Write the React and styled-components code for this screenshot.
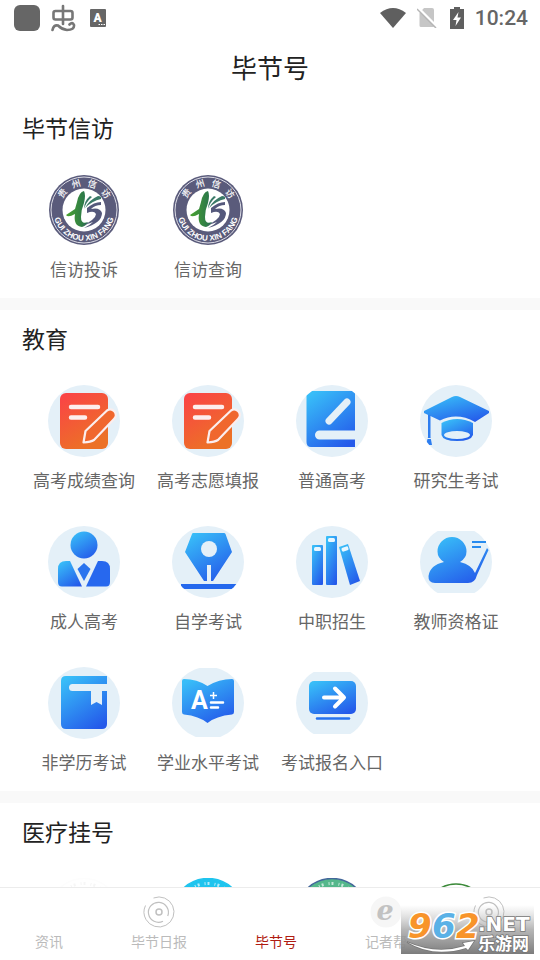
import React from "react";
import styled, { createGlobalStyle } from "styled-components";

const BLUE = "url(#blue)";
const PALE = "#e4f0f8";

const ExamIcon = () => (
	<>
		<circle cx="36" cy="36" r="36" fill={PALE} />
		<rect x="12" y="8" width="48" height="56" rx="6" fill="url(#red)" />
		<path
			d="M23 22H50M23 32.500H37"
			stroke="#fdeeee"
			strokeWidth="4.500"
			strokeLinecap="round"
		/>
		<path
			d="M35.500 57.500L37.500 46L59 25.500Q63 23 66.500 26.500Q69.500 30.500 66 34L46 55Q43 57 35.500 57.500Z"
			fill="#f0672e"
			stroke="#fbeeee"
			strokeWidth="2.200"
			strokeLinejoin="round"
		/>
	</>
);

const NotebookIcon = () => (
	<>
		<circle cx="36" cy="36" r="36" fill={PALE} />
		<g clipPath="url(#round)">
			<path
				d="M15 6H59V45.500H23.500A4.500 4.500 0 0 0 23.500 54.500H59V62H15Q10.500 62 10.500 57V11Q10.500 6 15 6Z"
				fill={BLUE}
			/>
			<path
				d="M33 36L51 17"
				stroke={PALE}
				strokeWidth="7"
				strokeLinecap="round"
			/>
		</g>
	</>
);

const CapIcon = () => (
	<>
		<circle cx="36" cy="36" r="36" fill={PALE} />
		<g clipPath="url(#round)">
			<path
				d="M4 26L32 12Q36 10 40 12L69 26V28L55 37Q37 27 20 35.500L4 28Z"
				fill={BLUE}
			/>
			<path
				d="M21.500 38Q37 30 53 38V50Q51 56 37 56Q23 56 21.500 50Z"
				fill={BLUE}
			/>
			<ellipse cx="37" cy="50" rx="13" ry="4" fill={PALE} />
			<path d="M8 30H10.500V52L12 60H6L8 52Z" fill="#2c7df0" />
			<path d="M6 53.500H12.500" stroke={PALE} />
		</g>
	</>
);

const SuitIcon = () => (
	<>
		<circle cx="36" cy="36" r="36" fill={PALE} />
		<circle cx="36" cy="19" r="13.500" fill={BLUE} />
		<path
			d="M18 35H22L34 60.500H14Q10 60.500 10 56V43Q10 35 18 35Z"
			fill={BLUE}
		/>
		<path
			d="M50 35H54Q62 35 62 43V56Q62 60.500 58 60.500H38Z"
			fill="#2768ee"
		/>
		<path d="M36 37L42.500 43L36 55L29.500 43Z" fill="#2a74ee" />
	</>
);

const NibIcon = () => (
	<>
		<circle cx="36" cy="36" r="36" fill={PALE} />
		<g clipPath="url(#round)">
			<path
				d="M21 7H52Q53 7 53.500 8L60 26L41 55H39V39H35V55H32L13 26L20 8Q20.500 7 21 7Z"
				fill={BLUE}
			/>
			<circle cx="37" cy="23" r="8" fill={PALE} />
			<rect x="9" y="58" width="56" height="5" fill="#2468ed" />
		</g>
	</>
);

const BooksIcon = () => (
	<>
		<circle cx="36" cy="36" r="36" fill={PALE} />
		<rect x="16" y="19" width="11" height="40" rx="1" fill={BLUE} />
		<rect x="30" y="10" width="11" height="49" rx="1" fill={BLUE} />
		<path d="M43 21L52 18L64 55L54 59Z" fill={BLUE} />
		<g fill="#e9f7ff">
			<rect x="18" y="21" width="7" height="4" rx="1.500" />
			<rect x="32" y="12" width="7" height="4" rx="1.500" />
			<rect
				x="45.500"
				y="21"
				width="7"
				height="4"
				rx="1.500"
				transform="rotate(-18 49 23)"
			/>
		</g>
	</>
);

const TeacherIcon = () => (
	<>
		<circle cx="36" cy="36" r="36" fill={PALE} clipPath="url(#band)" />
		<path
			d="M24 36Q17.500 32 17.500 25.500A14.500 14.500 0 0 1 46.500 25.500Q46.500 32 40 36Q52 39 55 47L67 22L68.500 24L57 49Q55 57 48 57H15Q8 57 8.500 50Q10 39 24 36Z"
			fill={BLUE}
		/>
		<path d="M52 16H66M52 21H61" stroke="#278bef" strokeWidth="2" />
	</>
);

const BookmarkIcon = () => (
	<>
		<circle cx="36" cy="36" r="36" fill={PALE} />
		<path
			d="M18 9H59V17H24.500A3.500 3.500 0 0 0 24.500 24H43V38L48.500 35L54 38V24H59V57Q59 62 54 62H18Q13 62 13 57V14Q13 9 18 9Z"
			fill={BLUE}
		/>
	</>
);

const GradeIcon = () => (
	<>
		<circle cx="36" cy="36" r="36" fill={PALE} clipPath="url(#wideBand)" />
		<path
			d="M12 12Q25 12 35.500 19Q47 12 60 12Q62 12 62 14V45Q62 47 60 47.500Q44 49 35.500 56Q27 49 12 47.500Q10 47 10 45V14Q10 12 12 12Z"
			fill={BLUE}
		/>
		<text
			x="19"
			y="42"
			fill="#fff"
			fontFamily="Roboto, sans-serif"
			fontWeight="700"
			fontSize="25"
		>
			A
		</text>
		<path
			d="M38 28.500H45M41.500 25V32"
			stroke="#fff"
			strokeWidth="1.500"
		/>
		<path
			d="M39 35.500H51M39 40.500H46"
			stroke="#fff"
			strokeWidth="2.500"
			strokeLinecap="round"
		/>
	</>
);

const EntryIcon = () => (
	<>
		<circle cx="36" cy="36" r="36" fill={PALE} clipPath="url(#band)" />
		<rect x="13" y="14" width="47" height="33" rx="5" fill={BLUE} />
		<path
			d="M28 30.500H47M39 21.500L48 30.500L39 39.500"
			fill="none"
			stroke="#fff"
			strokeWidth="4"
			strokeLinecap="round"
			strokeLinejoin="round"
		/>
		<path
			d="M21 51.500H53"
			stroke="#2671ee"
			strokeWidth="2.500"
			strokeLinecap="round"
		/>
	</>
);

const ringChars = [
	["贵", -52],
	["州", -17],
	["信", 18],
	["访", 53],
];

const SealIcon = () => (
	<>
		<circle cx="36" cy="36" r="35" fill="#5a5b7b" />
		<circle cx="36" cy="36" r="33" fill="none" stroke="#dcdce6" />
		<circle cx="36" cy="36" r="21.500" fill="#fff" />
		<g
			fill="#fff"
			fontFamily="'Noto Sans CJK SC', sans-serif"
			fontWeight="500"
			fontSize="9"
			textAnchor="middle"
		>
			{ringChars.map(([char, angle]) => (
				<text key={char} x="36" y="12" transform={`rotate(${angle} 36 36)`}>
					{char}
				</text>
			))}
		</g>
		<text
			fill="#fff"
			fontFamily="'Liberation Sans', sans-serif"
			fontWeight="700"
			fontSize="8"
			textAnchor="middle"
		>
			<textPath href="#sealArc" startOffset="50%">
				GUI ZHOU XIN FANG
			</textPath>
		</text>
		<path
			d="M36 17Q31 18 29 28L27 35L18 41Q20 44 27 40Q25 52 34 53Q38 52 40 48Q33 51 33 43Q33 36 36 29Q38 21 36 17Z"
			fill="url(#leaf)"
		/>
		<path
			d="M36 35Q36 27 42 22L44 23Q38 28 36 35ZM37 34Q41 26 50 22Q54 22 53 25Q44 27 37 34Z"
			fill="#3b7a68"
		/>
		<path
			d="M39 34Q46 28 53 28L53 31Q47 31 43 35Q52 33 54 39Q54 49 36 54Q42 51 45 48L34 52Q48 45 48 40Q46 36 39 39Z"
			fill="#55597c"
		/>
	</>
);

// hospital badges, drawn by ring colours
const BadgeIcon = ({ fill, edge, mark, r = 35.500 }) => (
	<>
		<circle cx="36" cy="36" r={r} fill={fill} stroke={edge} strokeWidth="1.500" />
		<circle
			cx="36"
			cy="36"
			r={r - 5}
			fill="none"
			stroke={mark}
			strokeWidth="3"
			strokeDasharray="1 2 2 5"
		/>
	</>
);

const sections = [
	{
		title: "毕节信访",
		items: [
			{ label: "信访投诉", icon: <SealIcon /> },
			{ label: "信访查询", icon: <SealIcon /> },
		],
	},
	{
		title: "教育",
		items: [
			{ label: "高考成绩查询", icon: <ExamIcon /> },
			{ label: "高考志愿填报", icon: <ExamIcon /> },
			{ label: "普通高考", icon: <NotebookIcon /> },
			{ label: "研究生考试", icon: <CapIcon /> },
			{ label: "成人高考", icon: <SuitIcon /> },
			{ label: "自学考试", icon: <NibIcon /> },
			{ label: "中职招生", icon: <BooksIcon /> },
			{ label: "教师资格证", icon: <TeacherIcon /> },
			{ label: "非学历考试", icon: <BookmarkIcon /> },
			{ label: "学业水平考试", icon: <GradeIcon /> },
			{ label: "考试报名入口", icon: <EntryIcon /> },
		],
	},
	{
		title: "医疗挂号",
		items: [
			{ icon: <BadgeIcon fill="#fff" edge="#fdfdfd" mark="#f6f6f6" /> },
			{ icon: <BadgeIcon fill="#1fc4ee" edge="#1fc4ee" mark="#b4ecfb" /> },
			{ icon: <BadgeIcon fill="#55b78b" edge="#43679a" mark="#c4e8d8" /> },
			{ icon: <BadgeIcon fill="#fff" edge="#3c8a3a" mark="#b4d6b0" r={30} /> },
		],
	},
];

const SpiralIcon = () => (
	<svg width="32" height="32" viewBox="0 0 32 32" fill="none" stroke="#c0c0c0">
		<circle cx="16" cy="16" r="3" strokeWidth="1.500" />
		<path d="M10.500 2A15 15 0 1 1 3 23.500" />
		<path d="M2.500 9.500A15 15 0 0 0 3 23.500" />
		<path d="M20 25.200A10 10 0 1 1 24.700 20" strokeWidth="1.200" />
	</svg>
);

const ReporterIcon = () => (
	<svg width="32" height="32" viewBox="0 0 32 32">
		<circle cx="16" cy="16" r="15.500" fill="#f6f6f6" />
		<text
			x="15"
			y="24"
			textAnchor="middle"
			fill="#c2c2c2"
			fontFamily="'DejaVu Serif', serif"
			fontStyle="italic"
			fontWeight="700"
			fontSize="27"
		>
			e
		</text>
	</svg>
);

const tabs = [
	{ id: "news", label: "资讯" },
	{ id: "daily", label: "毕节日报", icon: <SpiralIcon /> },
	{ id: "services", label: "毕节号", active: true },
	{ id: "reporter", label: "记者帮", icon: <ReporterIcon /> },
	{ id: "more", icon: <SpiralIcon /> },
];

const Gradients = () => (
	<HiddenSvg aria-hidden="true">
		<defs>
			<linearGradient id="blue" x1="0.200" y1="0" x2="0.800" y2="1">
				<stop offset="0" stopColor="#38bdf8" />
				<stop offset="1" stopColor="#2459ea" />
			</linearGradient>
			<linearGradient id="red" x1="0" y1="0" x2="0.500" y2="1">
				<stop offset="0" stopColor="#fb4148" />
				<stop offset="1" stopColor="#ec7126" />
			</linearGradient>
			<linearGradient id="leaf" x1="0" y1="0" x2="1" y2="0">
				<stop offset="0" stopColor="#4aa32f" />
				<stop offset="1" stopColor="#26704f" />
			</linearGradient>
			<clipPath id="round">
				<circle cx="36" cy="36" r="36" />
			</clipPath>
			<clipPath id="band">
				<rect y="5" width="72" height="62" />
			</clipPath>
			<clipPath id="wideBand">
				<rect y="1" width="72" height="69" />
			</clipPath>
			<path id="sealArc" d="M6 29A30.800 30.800 0 1 0 66 29" />
		</defs>
	</HiddenSvg>
);

const StatusIcons = () => (
	<StatusGroup>
		<svg width="26" height="26" viewBox="0 0 26 26">
			<rect width="26" height="26" rx="6" fill="#666" />
		</svg>
		<svg
			width="26"
			height="28"
			viewBox="0 0 26 28"
			fill="none"
			stroke="#777"
			strokeWidth="2.600"
			strokeLinecap="round"
		>
			<rect x="2.500" y="7" width="19" height="8.500" rx="2" />
			<path d="M12 2V20" />
			<path d="M1.500 26Q2.500 20.500 7 21.500Q11 25.500 16 26Q23.500 26 23 21Q21.500 17.500 18.500 20.500" />
		</svg>
		<svg width="16" height="18" viewBox="0 0 16 18">
			<rect width="16" height="18" rx="1" fill="#666" />
			<text
				x="7.500"
				y="13"
				textAnchor="middle"
				fill="#fff"
				fontFamily="Roboto, sans-serif"
				fontWeight="900"
				fontSize="12"
			>
				A
			</text>
			<path d="M8.500 15.500H15" stroke="#fff" strokeDasharray="1.500 1" />
		</svg>
	</StatusGroup>
);

const SignalIcons = () => (
	<StatusGroup>
		<svg width="26" height="20" viewBox="0 0 26 20">
			<path d="M0 5Q13 -5 26 5L13 20Z" fill="#5f5f5f" />
		</svg>
		<svg width="20" height="20" viewBox="0 0 20 20">
			<path d="M7 0H15Q17 0 17 2V18Q17 19 16 19H4Q2.500 19 2.500 17.500V5Z" fill="#c6c6c6" />
			<path d="M1 0L20 19" stroke="#fff" strokeWidth="3" />
			<path d="M0 1L19 20" stroke="#b5b5b5" strokeWidth="1.500" />
		</svg>
		<svg width="14" height="22" viewBox="0 0 14 22">
			<path d="M4 0H10V2H14V22H0V2H4Z" fill="#5f5f5f" />
			<path d="M8.500 5L3 13H6.500L5.500 19L11 10.500H7.500Z" fill="#fff" />
		</svg>
		<Clock>10:24</Clock>
	</StatusGroup>
);

const SiteBadge = () => (
	<BadgeCorner>
		<svg width="133" height="54" viewBox="0 0 133 54">
			<defs>
				<linearGradient id="shade" x1="0" y1="0" x2="0" y2="1">
					<stop offset="0" stopColor="#bbb" stopOpacity="0" />
					<stop offset="0.500" stopColor="#a4a4a4" stopOpacity="0.800" />
					<stop offset="1" stopColor="#7c7c7c" />
				</linearGradient>
			</defs>
			<rect y="5" width="133" height="49" fill="url(#shade)" />
			<g
				fontFamily="'DejaVu Sans', sans-serif"
				fontWeight="700"
				fontStyle="oblique"
				fontSize="34"
				stroke="#fff"
				strokeWidth="3"
				paintOrder="stroke"
			>
				<text x="7" y="38" fill="#f8942a">
					9
				</text>
				<text x="31" y="38" fill="#5ab1e6">
					6
				</text>
				<text x="55" y="38" fill="#f8942a">
					2
				</text>
			</g>
			<g fill="#fff" stroke="#777" strokeWidth="1.500" paintOrder="stroke">
				<text
					x="77"
					y="31"
					fontFamily="'DejaVu Sans', sans-serif"
					fontWeight="700"
					fontSize="20"
				>
					.NET
				</text>
				<text
					x="77"
					y="50"
					fontFamily="'Noto Sans CJK SC', sans-serif"
					fontWeight="700"
					fontSize="17"
				>
					乐游网
				</text>
				<path d="M6 42Q35 55 64 46L62 43L73 41L67 50L65 48Q32 58 6 42Z" />
			</g>
		</svg>
	</BadgeCorner>
);

const App = () => {
	return (
		<Screen>
			<GlobalStyle />
			<Gradients />
			<StatusBar>
				<StatusIcons />
				<SignalIcons />
			</StatusBar>
			<PageTitle>毕节号</PageTitle>
			<Content>
				{sections.map(({ title, items }) => (
					<Section key={title}>
						<SectionTitle>{title}</SectionTitle>
						<ServiceGrid>
							{items.map(({ label, icon }, i) => (
								<Service key={i}>
									<svg width="72" height="72" viewBox="0 0 72 72">
										{icon}
									</svg>
									{label && <span>{label}</span>}
								</Service>
							))}
						</ServiceGrid>
					</Section>
				))}
			</Content>
			<TabBar>
				{tabs.map(({ id, label, icon, active }) => (
					<TabButton key={id} $active={active}>
						<TabIcon>{icon}</TabIcon>
						{label}
					</TabButton>
				))}
			</TabBar>
			<SiteBadge />
		</Screen>
	);
};

export default App;

const GlobalStyle = createGlobalStyle`
	* {
		box-sizing: border-box;
	}

	body {
		margin: 0;
		background: #fff;
		font-family: "Noto Sans CJK SC", sans-serif;
	}

	button {
		border: 0;
		padding: 0;
		background: none;
		font-family: inherit;
		cursor: pointer;
	}
`;

const HiddenSvg = styled.svg`
	position: absolute;
	width: 0;
	height: 0;
`;

const Screen = styled.div`
	position: relative;
	display: flex;
	flex-direction: column;
	height: 100vh;
	overflow: hidden;
`;

const StatusBar = styled.div`
	display: flex;
	align-items: center;
	justify-content: space-between;
	height: 36px;
	padding: 0 12px 0 14px;
	flex-shrink: 0;
`;

const StatusGroup = styled.div`
	display: flex;
	align-items: center;
	gap: 11px;

	svg:nth-child(3) {
		margin-left: 2px;
	}
`;

const Clock = styled.span`
	font-family: Roboto, sans-serif;
	font-weight: 500;
	font-size: 21px;
	color: #666;
`;

const PageTitle = styled.h1`
	margin: 0;
	padding: 11px 0 13px;
	text-align: center;
	font-size: 26px;
	font-weight: 400;
	line-height: 39px;
	color: #222;
	flex-shrink: 0;
`;

const Content = styled.main`
	flex: 1;
	min-height: 0;
	overflow-y: auto;
	scrollbar-width: none;
`;

const Section = styled.section`
	& + & {
		border-top: 12px solid #f9f9f9;
	}
`;

const SectionTitle = styled.h2`
	margin: 0;
	padding: 13px 22px 15px;
	font-size: 23px;
	font-weight: 400;
	line-height: 30px;
	color: #222;
`;

const ServiceGrid = styled.div`
	display: grid;
	grid-template-columns: repeat(4, 1fr);
	padding: 0 22px;
`;

const Service = styled.button`
	display: flex;
	flex-direction: column;
	align-items: center;
	gap: 11px;
	padding: 17px 0;
	font-size: 17px;
	line-height: 24px;
	color: #666;
	white-space: nowrap;
`;

const TabBar = styled.nav`
	display: flex;
	justify-content: space-between;
	height: 73px;
	padding: 8px 37px 0 35px;
	border-top: 1px solid #ececec;
	background: #fff;
	flex-shrink: 0;
`;

const TabButton = styled.button`
	display: flex;
	flex-direction: column;
	align-items: center;
	gap: 3px;
	height: 56px;
	font-size: 14px;
	line-height: 20px;
	color: ${({ $active }) => ($active ? "#b01c12" : "#bbb")};
`;

const TabIcon = styled.span`
	display: flex;
	width: 32px;
	height: 32px;
	margin: 0 -2px;
`;

const BadgeCorner = styled.div`
	position: absolute;
	right: 6px;
	bottom: 6px;
	display: flex;
`;
